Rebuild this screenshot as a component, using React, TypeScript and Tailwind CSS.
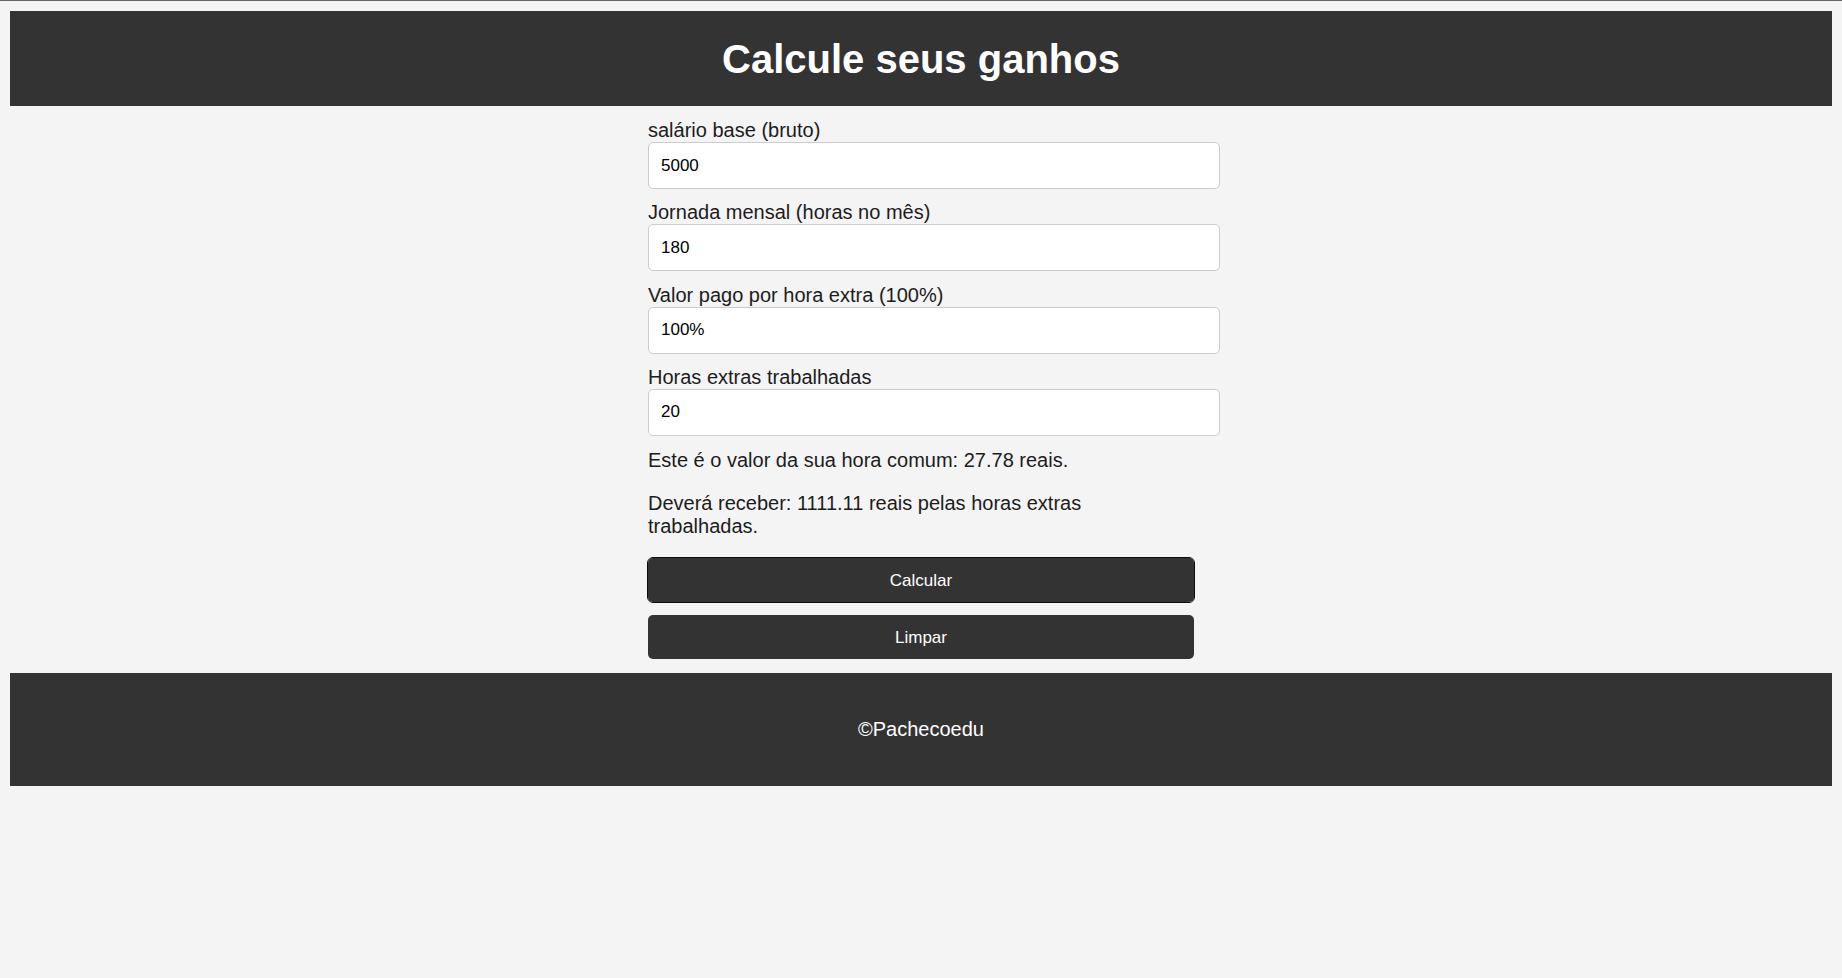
import { useState } from 'react';

const font = { fontFamily: '"Liberation Sans", Arial, sans-serif' };

const Field = ({ label, value, onChange }: { label: string; value: string; onChange: (v: string) => void }) => (
  <div className="flex flex-col">
    <label className="text-[20px] leading-[23px] text-[#1c1c1c]">{label}</label>
    <input
      type="text"
      value={value}
      onChange={(e) => onChange(e.target.value)}
      className="w-[572px] h-[47px] px-[12px] bg-white border border-[#cccccc] rounded-[5px] text-[17px] text-black outline-none"
    />
  </div>
);

const num = (v: string) => parseFloat(v.replace('%', '').replace(',', '.')) || 0;

export default function App() {
  const [salario, setSalario] = useState('5000');
  const [jornada, setJornada] = useState('180');
  const [percentual, setPercentual] = useState('100%');
  const [horas, setHoras] = useState('20');

  const calcular = (s: string, j: string, p: string, h: string) => {
    const hora = num(j) ? num(s) / num(j) : 0;
    const extra = hora * (1 + num(p) / 100) * num(h);
    return { hora: hora.toFixed(2), extra: extra.toFixed(2) };
  };

  const [result, setResult] = useState<{ hora: string; extra: string } | null>(() =>
    calcular('5000', '180', '100%', '20'),
  );

  const limpar = () => {
    setSalario('');
    setJornada('');
    setPercentual('');
    setHoras('');
    setResult(null);
  };

  return (
    <div className="min-h-screen bg-[#f4f4f4] flex flex-col" style={font}>
      <div className="h-px bg-[#666666]" />

      {/* Header */}
      <header className="mt-[10px] mx-[10px] h-[95px] bg-[#333333] flex items-center justify-center">
        <h1 className="text-[40px] leading-[46px] font-bold text-white">Calcule seus ganhos</h1>
      </header>

      {/* Form */}
      <main className="w-[546px] mx-auto pt-[13px] flex flex-col">
        <div className="flex flex-col gap-[12.33px]">
          <Field label="salário base (bruto)" value={salario} onChange={setSalario} />
          <Field label="Jornada mensal (horas no mês)" value={jornada} onChange={setJornada} />
          <Field label="Valor pago por hora extra (100%)" value={percentual} onChange={setPercentual} />
          <Field label="Horas extras trabalhadas" value={horas} onChange={setHoras} />
        </div>

        {result && (
          <div className="flex flex-col gap-[20px] mt-[13px] text-[20px] leading-[23px] text-[#1c1c1c]">
            <p>Este é o valor da sua hora comum: {result.hora} reais.</p>
            <p>Deverá receber: {result.extra} reais pelas horas extras trabalhadas.</p>
          </div>
        )}

        <div className="flex flex-col gap-[13px] mt-[20.5px]">
          <button
            onClick={() => setResult(calcular(salario, jornada, percentual, horas))}
            className="w-full h-[44px] rounded-[5px] bg-[#333333] text-white text-[17px] outline-[1.5px] outline-solid outline-[#0b0b0b]"
          >
            Calcular
          </button>
          <button onClick={limpar} className="w-full h-[44px] rounded-[5px] bg-[#333333] text-white text-[17px]">
            Limpar
          </button>
        </div>
      </main>

      {/* Footer */}
      <footer className="mt-[14px] mx-[10px] h-[113px] bg-[#333333] flex items-center justify-center">
        <p className="text-[20px] leading-[23px] text-white">©Pachecoedu</p>
      </footer>
    </div>
  );
}
